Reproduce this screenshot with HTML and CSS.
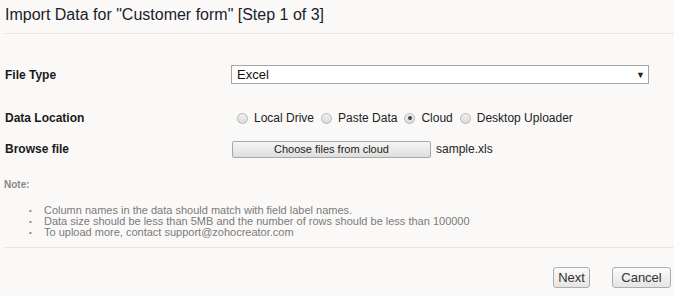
FILE: index.html
```html
<!DOCTYPE html>
<html lang="en">
<head>
  <meta charset="UTF-8" />
  <title>Import Data</title>
  <link rel="stylesheet" href="styles.css">
</head>
<body>
  <div class="page">
    <h1 class="title">Import Data for "Customer form" [Step 1 of 3]</h1>

    <div class="form">
      <div class="row row-type">
        <label class="label">File Type</label>
        <div class="field">
          <div class="select">
            <span>Excel</span>
            <span class="arrow">&#9660;</span>
          </div>
        </div>
      </div>

      <div class="row row-location">
        <label class="label">Data Location</label>
        <div class="field radios">
          <span class="radio"></span><span class="opt">Local Drive</span>
          <span class="radio"></span><span class="opt">Paste Data</span>
          <span class="radio checked"></span><span class="opt">Cloud</span>
          <span class="radio"></span><span class="opt">Desktop Uploader</span>
        </div>
      </div>

      <div class="row row-browse">
        <label class="label">Browse file</label>
        <div class="field">
          <button class="choose">Choose files from cloud</button>
          <span class="filename">sample.xls</span>
        </div>
      </div>
    </div>

    <div class="note">
      <p class="note-title">Note:</p>
      <ul class="note-list">
        <li>Column names in the data should match with field label names.</li>
        <li>Data size should be less than 5MB and the number of rows should be less than 100000</li>
        <li>To upload more, contact support@zohocreator.com</li>
      </ul>
    </div>

    <div class="actions">
      <button class="btn btn-next">Next</button>
      <button class="btn btn-cancel">Cancel</button>
    </div>
  </div>
</body>
</html>
```

FILE: styles.css
```css
* { margin:0; padding:0; box-sizing:border-box; }
body { background:#faf9f8; font-family:'Liberation Sans', Arial, sans-serif; color:#222; }

.page { padding-left:4px; }

.title {
  font-size:16px; font-weight:normal; color:#1c1c2a;
  line-height:20px; padding:5px 0 8px 1px;
  border-bottom:1px solid #e6e5e3;
}

/* form rows */
.form { padding-top:31px; }
.row { display:flex; align-items:center; }
.label { width:227px; padding-left:1px; font-size:12px; font-weight:bold; color:#1a1a1a; }
.field { display:flex; align-items:center; }

.row-type { height:19px; }
.row-location { height:20px; margin-top:24px; }
.row-browse { height:18px; margin-top:12px; }

.select {
  width:418px; height:19px; background:#fff; border:1px solid #a6a6a6;
  display:flex; align-items:center; justify-content:space-between;
  padding:0 3px 0 5px; font-size:13px; color:#111;
}
.select .arrow { font-size:9px; color:#222; }

.radios { padding-left:6px; font-size:12px; color:#222; }
.radio {
  width:11px; height:11px; border-radius:50%;
  border:1px solid #b4b4b4; background:linear-gradient(#f0f0f0, #dcdcdc);
  position:relative; margin-right:6px;
}
.radio.checked::after {
  content:''; position:absolute; left:2.5px; top:2.5px; width:4px; height:4px;
  border-radius:50%; background:#444;
}
.opt { margin-right:7px; }

.choose {
  width:199px; height:17px; margin-left:1px;
  border:1px solid #a8a8a8; border-radius:2px;
  background:linear-gradient(#f6f6f6, #dedede);
  font-family:inherit; font-size:11px; color:#222;
}
.filename { margin-left:5px; font-size:12px; color:#222; }

/* note */
.note { padding-top:21px; border-bottom:1px solid #e8e7e5; padding-bottom:9px; }
.note-title { font-size:10px; font-weight:bold; color:#888; line-height:12px; }
.note-list { margin-top:14px; padding-left:25px; font-size:11px; color:#7a7a7a; line-height:11px; list-style:none; }
.note-list li::before { content:'\2022'; display:inline-block; width:15px; font-size:8px; color:#888; vertical-align:1px; }

/* footer buttons */
.actions { display:flex; justify-content:flex-end; gap:22px; padding:19px 3px 0 0; }
.btn {
  height:21px; border:1px solid #adadad; border-radius:3px;
  background:linear-gradient(#fbfbfb, #e4e4e4);
  font-family:inherit; font-size:13px; color:#333;
}
.btn-next { width:37px; }
.btn-cancel { width:59px; }
```
